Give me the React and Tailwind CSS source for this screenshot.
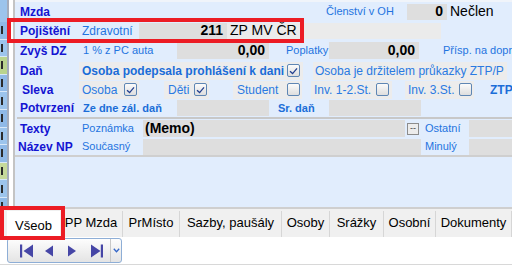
const F = "font-['Liberation_Sans',Arial,sans-serif]";

function Cb({ checked }) {
  return (
    <span className="w-[13px] h-[13px] shrink-0 rounded-[2px] border border-[#5e86b4] bg-gradient-to-b from-[#fbfbfb] to-[#dedede] flex items-center justify-center">
      {checked && (
        <svg width="9" height="8" viewBox="0 0 9 8">
          <path d="M1 4.2 L3.6 6.6 L8 1.4" stroke="#24408f" strokeWidth="1.3" fill="none" />
        </svg>
      )}
    </span>
  );
}

function Lbl({ children, className = "" }) {
  return (
    <div className={`shrink-0 font-bold text-[12px] text-[#1414d2] ${className}`}>{children}</div>
  );
}

function Box({ w, children, className = "" }) {
  return (
    <div className={`shrink-0 h-[16px] bg-[#dedede] flex items-center justify-end pr-[4px] font-bold text-[14px] text-black ${w} ${className}`}>
      {children}
    </div>
  );
}

function Nav() {
  const c = "#4646a6";
  return (
    <div className="mt-[1px] w-[115px] h-[25px] rounded-[3px] border border-[#8eaed6] bg-gradient-to-b from-[#fdfdfd] to-[#e4e4e4] flex items-center">
      <div className="w-[102px] flex items-center">
        <svg width="102" height="14" viewBox="0 0 102 14">
          <rect x="12" y="0.5" width="2.2" height="13" fill={c} />
          <path d="M25 0.5 L15.5 7 L25 13.5 Z" fill={c} />
          <path d="M45 1.5 L37 7 L45 12.5 Z" fill={c} />
          <path d="M60 1.5 L68 7 L60 12.5 Z" fill={c} />
          <path d="M83 0.5 L92.5 7 L83 13.5 Z" fill={c} />
          <rect x="92.8" y="0.5" width="2.2" height="13" fill={c} />
        </svg>
      </div>
      <div className="h-full w-[1px] bg-[#c8c8c8]" />
      <div className="flex-1 flex items-center justify-center">
        <svg width="7" height="5" viewBox="0 0 7 5">
          <path d="M0.8 0.8 L3.5 3.8 L6.2 0.8" stroke="#3466c8" strokeWidth="1.3" fill="none" />
        </svg>
      </div>
    </div>
  );
}

const tabs = [
  ["PP Mzda", "w-[63px]"],
  ["PrMísto", "w-[57px]"],
  ["Sazby, paušály", "w-[102px]"],
  ["Osoby", "w-[48px]"],
  ["Srážky", "w-[54px]"],
  ["Osobní", "w-[52px]"],
  ["Dokumenty", "w-[76px]"],
];

export default function App() {
  // edge of the neighbouring grid window, only a sliver is visible
  const strip = ["bg-[#8fb9e7]", "bg-[#9cc4ec]", "bg-[#b9d48e]", "bg-[#8fb9e7]", "bg-[#9cc4ec]", "bg-[#8fb9e7]", "bg-[#9cc4ec]", "bg-[#8fb9e7]", "bg-[#c5d99a]", "bg-[#9cc4ec]", "bg-[#8fb9e7]"];
  return (
    <div className={`relative w-[512px] h-[268px] overflow-hidden bg-white ${F} whitespace-nowrap`}>
      {/* upper form */}
      <div className="flex h-[209px]">
        <div className="w-[7px] shrink-0 flex flex-col overflow-hidden bg-[#8fb9e7]">
          <div className="h-[22px] shrink-0 bg-[#9cc4ec]" />
          {strip.map((s, i) => (
            <div key={i} className={`h-[17.6px] shrink-0 ${s} border-b border-[#d8e8f8] flex items-center`}>
              <span className="ml-[1px] w-[2px] h-[8px] bg-[#2a2a2a]" />
            </div>
          ))}
        </div>
        <div className="w-[2px] shrink-0 bg-[#a4acbc]" />
        <div className="w-[4px] shrink-0 bg-white" />
        <div className="w-[2px] shrink-0 bg-[#c4c4c4]" />

        <div className="flex-1 min-w-0 overflow-hidden bg-[#e1edfd] border-t-2 border-[#f0f4fa] border-b-2 border-b-[#cfcfcf] flex flex-col">
          {/* Mzda */}
          <div className="flex items-center h-[19px]">
            <Lbl className="w-[67px] pl-[5px]">Mzda</Lbl>
            <div className="w-[244px] shrink-0" />
            <div className="w-[81px] shrink-0 text-[11px] text-[#1f74e0]">Členství v OH</div>
            <Box w="w-[40px]">0</Box>
            <div className="pl-[3px] text-[14px] text-black">Nečlen</div>
          </div>
          {/* Pojištění */}
          <div className="flex items-center h-[19px]">
            <Lbl className="w-[67px] pl-[5px]">Pojištění</Lbl>
            <div className="w-[57px] shrink-0 text-[12px] text-[#1f74e0]">Zdravotní</div>
            <Box w="w-[88px]">211</Box>
            <div className="w-[214px] shrink-0 h-[16px] bg-[#ebebeb] pl-[3px] flex items-center text-[14px] text-black">ZP MV ČR</div>
          </div>
          {/* Zvyš DZ */}
          <div className="flex items-center h-[21px]">
            <Lbl className="w-[67px] pl-[5px]">Zvyš DZ</Lbl>
            <div className="w-[95px] shrink-0 pl-[1px] text-[11px] text-[#1f74e0]">1 % z PC auta</div>
            <Box w="w-[92px]" className="h-[17px]">0,00</Box>
            <div className="w-[17px] shrink-0" />
            <div className="w-[43px] shrink-0 text-[11px] text-[#1f74e0]">Poplatky</div>
            <Box w="w-[90px]" className="h-[17px]">0,00</Box>
            <div className="w-[24px] shrink-0" />
            <div className="text-[11px] text-[#1f74e0]">Přísp. na dopravu</div>
          </div>
          {/* Daň */}
          <div className="flex items-center h-[19px]">
            <Lbl className="w-[64px] pl-[5px]">Daň</Lbl>
            <div className="w-[224px] shrink-0 h-[18px] bg-[#ececec] pl-[3px] pr-[3px] flex items-center">
              <span className="font-bold text-[12px] text-[#1b6dd8]">Osoba podepsala prohlášení k dani</span>
              <span className="ml-auto"><Cb checked /></span>
            </div>
            <div className="w-[10px] shrink-0" />
            <div className="w-[194px] shrink-0 h-[18px] bg-[#ececec] pl-[2px] flex items-center text-[12px] text-[#2a7ae2]">Osoba je držitelem průkazky ZTP/P</div>
          </div>
          {/* Sleva */}
          <div className="flex items-center h-[19px] text-[12px] text-[#2a7ae2]">
            <Lbl className="w-[64px] pl-[7px]">Sleva</Lbl>
            <div className="w-[60px] shrink-0 h-[18px] bg-[#ececec] pl-[3px] pr-[2px] flex items-center">
              <span>Osoba</span><span className="ml-auto"><Cb checked /></span>
            </div>
            <div className="w-[25px] shrink-0" />
            <div className="w-[45px] shrink-0 h-[18px] bg-[#ececec] pl-[4px] pr-[2px] flex items-center">
              <span>Děti</span><span className="ml-auto"><Cb checked /></span>
            </div>
            <div className="w-[24px] shrink-0" />
            <div className="w-[69px] shrink-0 h-[18px] bg-[#ececec] pl-[4px] pr-[2px] flex items-center">
              <span>Student</span><span className="ml-auto"><Cb /></span>
            </div>
            <div className="w-[9px] shrink-0" />
            <div className="w-[81px] shrink-0 h-[18px] bg-[#ececec] pl-[3px] pr-[3px] flex items-center">
              <span>Inv. 1-2.St.</span><span className="ml-auto"><Cb /></span>
            </div>
            <div className="w-[13px] shrink-0" />
            <div className="w-[69px] shrink-0 h-[18px] bg-[#ececec] pl-[3px] pr-[2px] flex items-center">
              <span>Inv. 3.St.</span><span className="ml-auto"><Cb /></span>
            </div>
            <div className="w-[16px] shrink-0" />
            <span className="font-bold text-[#1b6dd8]">ZTP</span>
          </div>
          {/* Potvrzení */}
          <div className="flex items-center h-[18px]">
            <Lbl className="w-[67px] pl-[5px]">Potvrzení</Lbl>
            <div className="w-[95px] shrink-0 pl-[1px] font-bold text-[11px] text-[#1b6dd8]">Ze dne zál. daň</div>
            <Box w="w-[92px]" />
            <div className="w-[60px] shrink-0 pl-[9px] font-bold text-[11px] text-[#1b6dd8]">Sr. daň</div>
            <Box w="w-[92px]" />
          </div>
          <div className="h-[2px] ml-[2px] shrink-0 bg-[#c8c8c8]" />
          {/* Texty */}
          <div className="flex items-center h-[19px]">
            <Lbl className="w-[67px] pl-[5px]">Texty</Lbl>
            <div className="w-[61px] shrink-0 text-[11px] text-[#1f74e0]">Poznámka</div>
            <div className="w-[262px] shrink-0 h-[17px] bg-[#dedede] pl-[2px] flex items-center font-bold text-[14px] text-black">(Memo)</div>
            <div className="w-[2px] shrink-0" />
            <div className="w-[12px] h-[12px] shrink-0 border border-[#8c8c8c] bg-[#ececec] flex items-center justify-center text-[9px] leading-none text-[#404040]">--</div>
            <div className="w-[2px] shrink-0" />
            <div className="w-[48px] shrink-0 pl-[4px] text-[11px] text-[#1f74e0]">Ostatní</div>
            <div className="flex-1 h-[17px] bg-[#dedede]" />
          </div>
          {/* Název NP */}
          <div className="flex items-center h-[17px]">
            <Lbl className="w-[67px] pl-[3px]">Název NP</Lbl>
            <div className="w-[61px] shrink-0 text-[11px] text-[#1f74e0]">Současný</div>
            <div className="w-[278px] shrink-0 h-[16px] bg-[#dedede]" />
            <div className="w-[48px] shrink-0 pl-[4px] text-[11px] text-[#1f74e0]">Minulý</div>
            <div className="flex-1 h-[16px] bg-[#dedede]" />
          </div>
          <div className="h-[2px] shrink-0 bg-[#cfcfcf]" />
          <div className="flex-1" />
        </div>
      </div>

      {/* tabs */}
      <div className="flex h-[28px] bg-[#f0f0f0] pl-[7px] items-end text-[13px] text-black">
        <div className="w-[53px] h-[26px] shrink-0 bg-white flex items-center justify-center pt-[3px]">Všeob</div>
        {tabs.map(([t, w]) => (
          <div key={t} className={`${w} h-[26px] shrink-0 border-r border-[#d6d6d6] flex items-center justify-center pb-[2px]`}>{t}</div>
        ))}
      </div>

      {/* navigator */}
      <div className="h-[27px] pl-[7px] bg-white border-b border-[#d8d8d8]">
        <Nav />
      </div>

      {/* highlight frames */}
      <div className="absolute left-[7px] top-[18px] w-[297px] h-[25px] border-4 border-[#ec1c24]" />
      <div className="absolute left-0 top-[206px] w-[65px] h-[34px] border-4 border-[#ec1c24]" />
    </div>
  );
}
